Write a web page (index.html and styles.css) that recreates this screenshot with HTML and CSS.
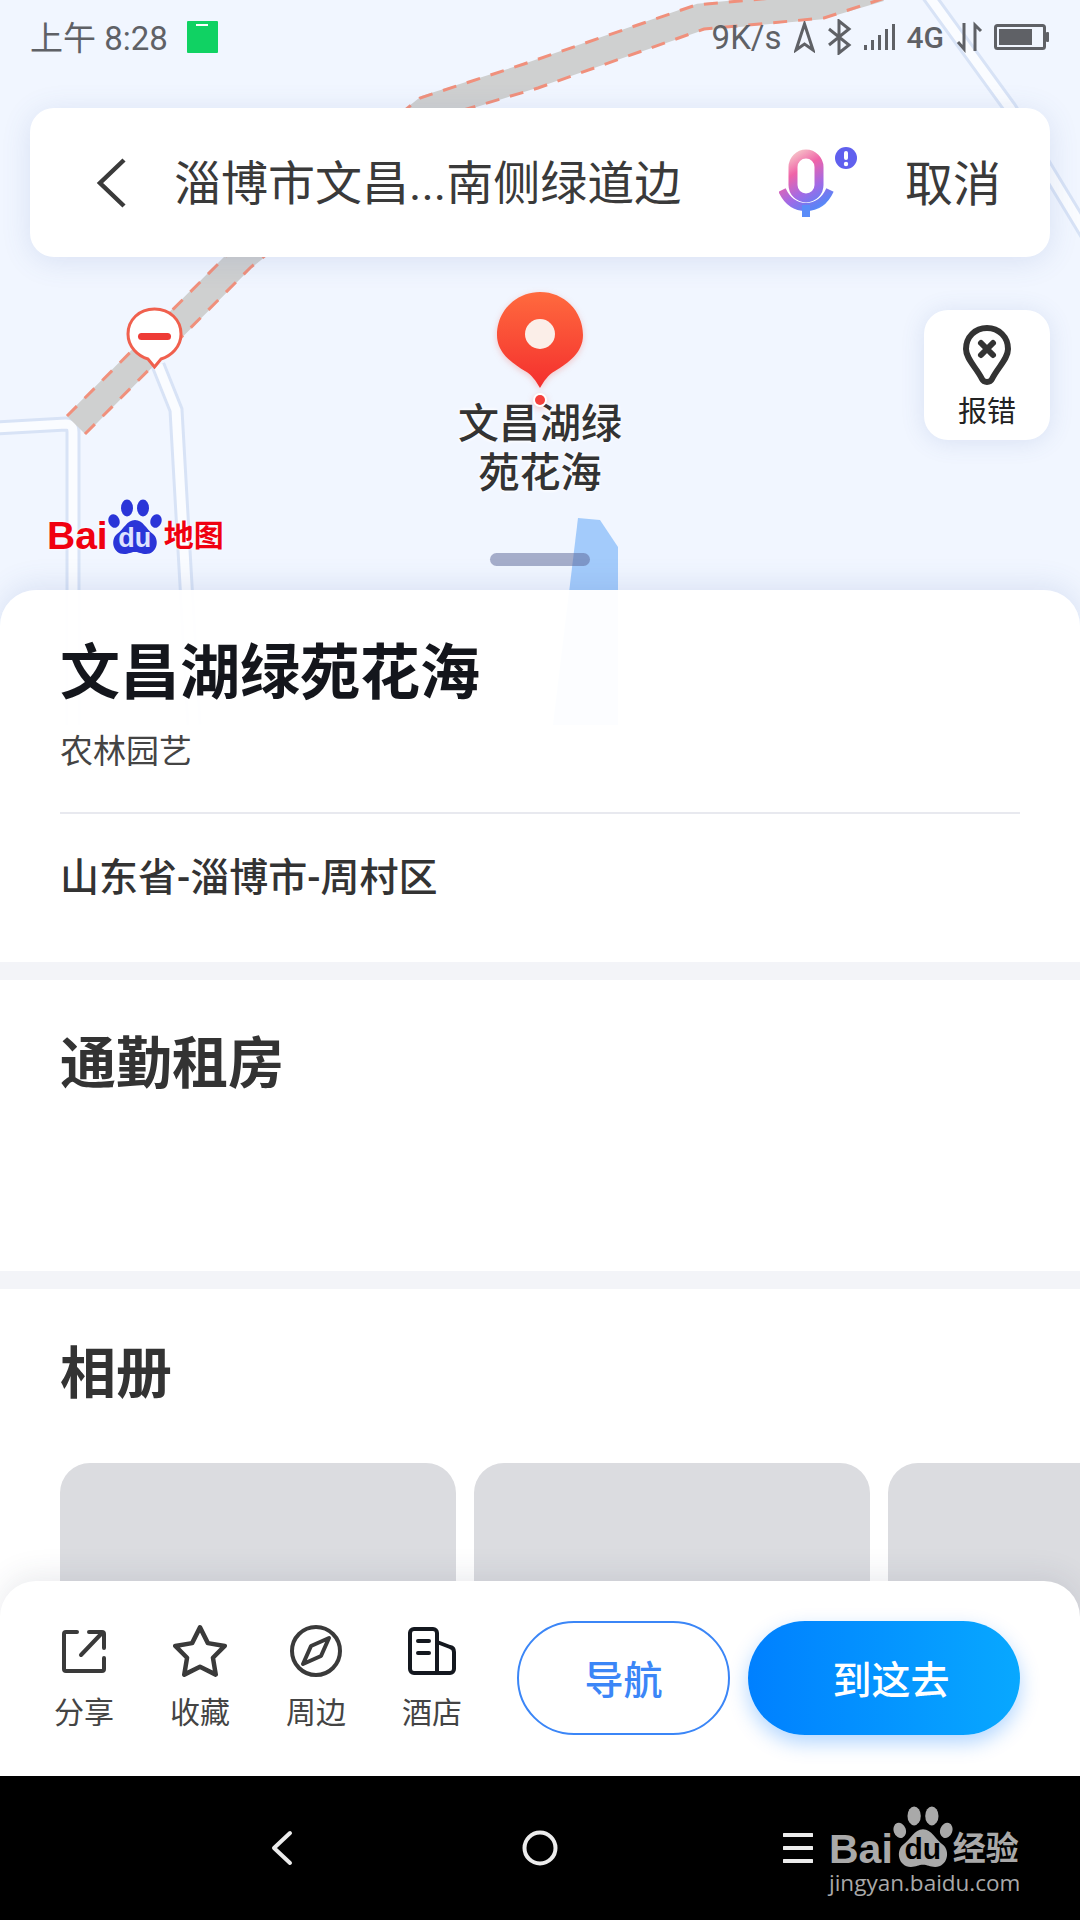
FILE: index.html
```html
<!DOCTYPE html>
<html lang="zh-CN">
<head>
    <meta charset="UTF-8">
    <title>文昌湖绿苑花海</title>
    <link rel="stylesheet" href="styles.css">
</head>
<body>
<div class="screen">
    <!-- map drawing, runs under the top of the sheet -->
    <svg class="map-canvas" width="1080" height="725" viewBox="0 0 1080 725">
        <path class="water" d="M578 518 L600 520 L618 547 L618 725 L553 725 Z"/>
        <path class="road-edge" d="M928 -5 L1010 108 L1090 240"/>
        <path class="road-fill" d="M928 -5 L1010 108 L1090 240"/>
        <path class="road-edge" d="M-5 428 L66 424 Q73 424 73 432 L73 725"/>
        <path class="road-fill" d="M-5 428 L66 424 Q73 424 73 432 L73 725"/>
        <path class="road-edge" d="M158 365 L176 410 L194 725"/>
        <path class="road-fill" d="M158 365 L176 410 L194 725"/>
        <path class="rail" d="M76 425 L242 258 L428 108 L530 76 L700 17 L820 6 L880 -12"/>
        <path class="rail-dash" d="M85 434 L251 267 L436 118 L538 88 L704 29 L824 18 L885 -2"/>
        <path class="rail-dash" d="M67 416 L233 249 L420 98 L524 64 L696 5 L816 -6"/>
    </svg>

    <div class="map-area">
        <div class="statusbar">
            <div class="status-left">
                <span class="clock">上午 8:28</span>
                <svg class="wechat-tag" width="31" height="32" viewBox="0 0 31 32">
                    <rect width="31" height="32" rx="1" fill="#10d263"/>
                    <rect x="9" y="3" width="12" height="2" fill="#fff"/>
                </svg>
            </div>
            <div class="status-right">
                <span class="speed">9K/s</span>
                <svg width="21" height="32" viewBox="0 0 21 32"><path class="st-line" d="M10.5 3 L19 29 L10.5 23 L2 29 Z"/></svg>
                <svg width="25" height="36" viewBox="0 0 25 36"><path class="st-line" d="M2 10 L22 26 L12 34 V2 L22 10 L2 26"/></svg>
                <svg width="32" height="28" viewBox="0 0 32 28">
                    <rect class="st-fill" x="0" y="22" width="3" height="5"/>
                    <rect class="st-fill" x="7" y="17" width="3" height="10"/>
                    <rect class="st-fill" x="14" y="12" width="3" height="15"/>
                    <rect class="st-fill" x="21" y="6" width="3" height="21"/>
                    <rect class="st-fill" x="28" y="1" width="3" height="26"/>
                </svg>
                <span class="net">4G</span>
                <svg width="27" height="32" viewBox="0 0 27 32">
                    <path class="st-line" d="M8 2 V28 L2 21"/>
                    <path class="st-line" d="M19 30 V4 L25 10"/>
                </svg>
                <svg class="battery" width="56" height="28" viewBox="0 0 56 28">
                    <rect class="st-line" x="1.5" y="2.5" width="49" height="23" rx="2" stroke-width="2"/>
                    <rect class="st-fill" x="5" y="6" width="33" height="16"/>
                    <rect class="st-fill" x="52" y="9" width="3" height="10" rx="1"/>
                </svg>
            </div>
        </div>

        <div class="search">
            <svg class="search-back" width="34" height="52" viewBox="0 0 34 52"><path d="M30 3 L6 26 L30 49"/></svg>
            <div class="search-text">淄博市文昌<span class="dots">...</span>南侧绿道边</div>
            <svg class="mic" width="80" height="72" viewBox="0 0 80 72">
                <defs>
                    <linearGradient id="micGrad" gradientUnits="userSpaceOnUse" x1="14" y1="6" x2="52" y2="68">
                        <stop offset="0" stop-color="#f6c3c8"/>
                        <stop offset="0.25" stop-color="#f064a8"/>
                        <stop offset="0.55" stop-color="#a06ae6"/>
                        <stop offset="0.8" stop-color="#5a84f6"/>
                        <stop offset="1" stop-color="#6cc0ff"/>
                    </linearGradient>
                </defs>
                <rect x="14" y="7" width="26" height="44" rx="13" fill="none" stroke="url(#micGrad)" stroke-width="9"/>
                <path d="M3 43 C9 56 18 60 27 60 C36 60 45 56 51 43" fill="none" stroke="url(#micGrad)" stroke-width="8"/>
                <rect x="23" y="58" width="8" height="12" fill="#5a8cf8"/>
                <circle cx="67" cy="11" r="11" fill="#6060ee"/>
                <rect x="65" y="4" width="4" height="9" rx="2" fill="#fff"/>
                <circle cx="67" cy="17" r="2.2" fill="#fff"/>
            </svg>
            <div class="search-cancel">取消</div>
        </div>

        <!-- things placed on the map -->
        <svg class="closed-marker" width="57" height="62" viewBox="0 0 57 62">
            <path d="M28.5 2 C13 2 2 13 2 27 C2 40 12 49 22 52 L28.5 60 L35 52 C45 49 55 40 55 27 C55 13 44 2 28.5 2 Z" fill="#fff" stroke="#f0604e" stroke-width="3"/>
            <rect x="12" y="26" width="33" height="7" rx="3.5" fill="#ee3b36"/>
        </svg>

        <div class="poi">
            <svg width="90" height="116" viewBox="0 0 90 116">
                <defs>
                    <linearGradient id="pinGrad" x1="0" y1="0" x2="0" y2="1">
                        <stop offset="0" stop-color="#ff6a3e"/>
                        <stop offset="1" stop-color="#f42f2e"/>
                    </linearGradient>
                </defs>
                <path d="M45 1 C21 1 2 20 2 44 C2 62 17 72 30 80 C37 84 41 90 45 97 C49 90 53 84 60 80 C73 72 88 62 88 44 C88 20 69 1 45 1 Z" fill="url(#pinGrad)"/>
                <circle cx="45" cy="43" r="15" fill="#fbeee8"/>
                <circle cx="45" cy="109" r="7" fill="#fff"/>
                <circle cx="45" cy="109" r="5" fill="#f5403c"/>
            </svg>
            <div class="poi-label">文昌湖绿<br>苑花海</div>
        </div>

        <div class="map-logo">
            <span class="logo-bai">Bai</span>
            <span class="logo-paw">
                <svg width="54" height="56" viewBox="0 0 54 56">
                    <ellipse cx="6" cy="22" rx="5.5" ry="7" transform="rotate(-20 6 22)"/>
                    <ellipse cx="19" cy="9" rx="6" ry="8.5"/>
                    <ellipse cx="35" cy="9" rx="6" ry="8.5"/>
                    <ellipse cx="48" cy="22" rx="5.5" ry="7" transform="rotate(20 48 22)"/>
                    <path d="M27 21 C19 21 16 30 9 35 C2 41 5 55 16 55 C21 55 23 53 27 53 C31 53 33 55 38 55 C49 55 52 41 45 35 C38 30 35 21 27 21 Z"/>
                </svg>
                <span class="logo-du">du</span>
            </span>
            <span class="logo-cn">地图</span>
        </div>

        <div class="report">
            <svg width="48" height="60" viewBox="0 0 48 60">
                <path d="M24 3 C12 3 3 12 3 24 C3 34 13 42 19 54 C21 58 27 58 29 54 C35 42 45 34 45 24 C45 12 36 3 24 3 Z"/>
                <path class="report-x" d="M18 18 L30 30 M30 18 L18 30"/>
            </svg>
            <div class="report-label">报错</div>
        </div>

        <div class="handle"></div>
    </div>

    <div class="sheet">
        <section class="section place">
            <h1 class="place-name">文昌湖绿苑花海</h1>
            <div class="place-type">农林园艺</div>
            <div class="place-line"></div>
            <div class="place-addr">山东省-淄博市-周村区</div>
        </section>
        <section class="section commute">
            <h2 class="section-title">通勤租房</h2>
        </section>
        <section class="section album">
            <h2 class="section-title">相册</h2>
            <div class="photos">
                <div class="photo"></div>
                <div class="photo"></div>
                <div class="photo"></div>
            </div>
        </section>

        <div class="actions">
            <div class="action">
                <svg width="48" height="48" viewBox="0 0 48 48">
                    <path d="M17 5 H6 a2 2 0 0 0 -2 2 V42 a2 2 0 0 0 2 2 H42 a2 2 0 0 0 2 -2 V31"/>
                    <path d="M29 5 H42 a2 2 0 0 1 2 2 V21"/>
                    <path d="M42 6 L21 28"/>
                </svg>
                <span>分享</span>
            </div>
            <div class="action">
                <svg width="54" height="48" viewBox="0 0 48 48">
                    <path d="M24 3 L31 17 L46 19.5 L35.5 30 L38 45 L24 38 L10 45 L12.5 30 L2 19.5 L17 17 Z"/>
                </svg>
                <span>收藏</span>
            </div>
            <div class="action">
                <svg width="52" height="52" viewBox="0 0 52 52">
                    <circle cx="26" cy="26" r="24"/>
                    <path d="M39 13 L31 31 L13 39 L21 21 Z"/>
                </svg>
                <span>周边</span>
            </div>
            <div class="action">
                <svg class="dark" width="52" height="48" viewBox="0 0 52 48">
                    <path d="M8 2 H27 a4 4 0 0 1 4 4 V46 H8 a4 4 0 0 1 -4 -4 V6 a4 4 0 0 1 4 -4 Z"/>
                    <path d="M31 15 L44 20 a5 5 0 0 1 4 5 V42 a4 4 0 0 1 -4 4 H31"/>
                    <path d="M12 14 H23 M12 26 H23"/>
                </svg>
                <span>酒店</span>
            </div>
            <div class="btn btn-nav">导航</div>
            <div class="btn btn-go">到这去</div>
        </div>
    </div>

    <div class="navbar">
        <div class="nav-cell">
            <svg width="24" height="36" viewBox="0 0 24 36"><path d="M20 3 L4 18 L20 33"/></svg>
        </div>
        <div class="nav-cell">
            <svg width="36" height="36" viewBox="0 0 36 36"><circle cx="18" cy="18" r="15.5"/></svg>
        </div>
        <div class="nav-cell">
            <svg width="30" height="32" viewBox="0 0 30 32"><path d="M1 3 H29 M1 16 H29 M1 29 H29"/></svg>
        </div>
        <div class="watermark">
            <div class="wm-logo">
                <span class="wm-bai">Bai</span>
                <span class="wm-paw">
                    <svg width="60" height="62" viewBox="0 0 54 56">
                        <ellipse cx="6" cy="22" rx="5.5" ry="7" transform="rotate(-20 6 22)"/>
                        <ellipse cx="19" cy="9" rx="6" ry="8.5"/>
                        <ellipse cx="35" cy="9" rx="6" ry="8.5"/>
                        <ellipse cx="48" cy="22" rx="5.5" ry="7" transform="rotate(20 48 22)"/>
                        <path d="M27 21 C19 21 16 30 9 35 C2 41 5 55 16 55 C21 55 23 53 27 53 C31 53 33 55 38 55 C49 55 52 41 45 35 C38 30 35 21 27 21 Z"/>
                    </svg>
                    <span class="wm-du">du</span>
                </span>
                <span class="wm-cn">经验</span>
            </div>
            <div class="wm-url">jingyan.baidu.com</div>
        </div>
    </div>
</div>
</body>
</html>
```

FILE: styles.css
```css
* {
    box-sizing: border-box;
}

body {
    margin: 0;
    font-family: Roboto, "Noto Sans CJK SC", sans-serif;
    color: #333;
}

.screen {
    position: relative;
    width: 1080px;
    height: 1920px;
    display: flex;
    flex-direction: column;
    overflow: hidden;
    background-color: #f1f6ff;
}

/* map */
.map-canvas {
    position: absolute;
    top: 0;
    left: 0;
}

.water {
    fill: #a3cbfb;
}

.road-edge,
.road-fill,
.rail,
.rail-dash {
    fill: none;
}

.road-edge {
    stroke: #d8e3f6;
    stroke-width: 15;
}

.road-fill {
    stroke: #fafcff;
    stroke-width: 9;
}

.rail {
    stroke: #cfd0d0;
    stroke-width: 27;
}

.rail-dash {
    stroke: #f0907c;
    stroke-width: 3;
    stroke-dasharray: 14 11;
}

.map-area {
    position: relative;
    flex: 0 0 590px;
}

/* status bar */
.statusbar {
    display: flex;
    justify-content: space-between;
    align-items: center;
    height: 74px;
    padding: 0 30px;
    font-size: 33px;
    color: #5f6166;
}

.status-left,
.status-right {
    display: flex;
    align-items: center;
}

.clock {
    margin-bottom: 2px;
}

.wechat-tag {
    margin-left: 19px;
}

.status-right svg {
    margin-left: 12px;
}

.status-right .battery {
    margin-left: 11px;
}

.net {
    margin-left: 11px;
    font-size: 30px;
    font-weight: 500;
}

.st-line {
    fill: none;
    stroke: #5f6166;
    stroke-width: 3;
}

.st-fill {
    fill: #5f6166;
}

/* search card */
.search {
    position: relative;
    display: flex;
    align-items: center;
    height: 149px;
    margin: 34px 30px 0;
    padding: 0 49px 0 64px;
    background-color: #fff;
    border-radius: 24px;
    box-shadow: 0 4px 30px rgba(70, 100, 170, 0.14);
}

.search-back path {
    fill: none;
    stroke: #3a3a3a;
    stroke-width: 4.5;
}

.search-text {
    margin-left: 46px;
    padding-bottom: 6px;
    font-size: 47px;
    white-space: nowrap;
    color: #3a3a3a;
}

.mic {
    margin-left: 98px;
}

.search-cancel {
    margin-left: auto;
    padding-bottom: 6px;
    font-size: 48px;
    color: #3a3a3a;
}

/* map pins */
.closed-marker {
    position: absolute;
    top: 307px;
    left: 126px;
}

.poi {
    position: absolute;
    top: 291px;
    left: 440px;
    width: 200px;
    display: flex;
    flex-direction: column;
    align-items: center;
}

.poi svg {
    display: block;
    filter: drop-shadow(0 2px 3px rgba(240, 60, 40, 0.25));
}

.poi-label {
    margin-top: -7px;
    font-size: 41px;
    font-weight: 500;
    line-height: 49px;
    text-align: center;
    text-shadow: 0 0 4px #fff, 0 0 4px #fff;
}

.map-logo {
    position: absolute;
    top: 499px;
    left: 47px;
    display: flex;
    align-items: flex-end;
    color: #f00010;
}

.logo-bai {
    margin-bottom: -3px;
    font-family: "Liberation Sans", sans-serif;
    font-size: 39px;
    font-weight: bold;
    line-height: 44px;
    text-shadow: 0 0 3px #fff;
}

.logo-paw {
    position: relative;
    width: 54px;
    height: 56px;
    fill: #2a35d8;
}

.logo-du {
    position: absolute;
    left: 0;
    right: 0;
    bottom: 2px;
    font-family: "Liberation Sans", sans-serif;
    font-size: 27px;
    font-weight: bold;
    line-height: 30px;
    text-align: center;
    color: #dfe3ff;
}

.logo-cn {
    margin-left: 2px;
    margin-bottom: -3px;
    font-size: 30px;
    font-weight: bold;
    line-height: 44px;
    text-shadow: 0 0 3px #fff;
}

.report {
    position: absolute;
    top: 310px;
    right: 30px;
    width: 126px;
    height: 130px;
    padding-top: 15px;
    background-color: #fff;
    border-radius: 24px;
    box-shadow: 0 2px 24px rgba(70, 100, 170, 0.14);
    text-align: center;
}

.report svg {
    display: block;
    margin: 0 auto;
}

.report path {
    fill: none;
    stroke: #333;
    stroke-width: 6;
    stroke-linecap: round;
}

.report-label {
    margin-top: 8px;
    font-size: 29px;
    line-height: 38px;
    color: #222;
}

.handle {
    position: absolute;
    top: 553px;
    left: 490px;
    width: 100px;
    height: 13px;
    border-radius: 7px;
    background-color: rgba(90, 100, 150, 0.5);
}

/* bottom sheet */
.sheet {
    position: relative;
    flex: 1;
    overflow: hidden;
    border-radius: 36px 36px 0 0;
    box-shadow: 0 -4px 30px rgba(70, 100, 170, 0.14);
}

.section {
    padding-left: 60px;
    border-bottom: 18px solid #f3f4f8;
    background-color: #fff;
}

.place {
    height: 390px;
    padding-top: 54px;
    padding-right: 60px;
    background-color: rgba(255, 255, 255, 0.96);
}

.place-name {
    margin: 0;
    font-size: 60px;
    font-weight: bold;
    line-height: 60px;
    color: #14161c;
}

.place-type {
    margin-top: 28px;
    font-size: 33px;
    line-height: 40px;
    color: #444;
}

.place-line {
    height: 2px;
    margin-top: 40px;
    background-color: #e8e9ef;
}

.place-addr {
    margin-top: 39px;
    font-size: 39px;
    font-weight: 500;
    line-height: 50px;
}

.commute {
    height: 309px;
    padding-top: 54px;
}

.section-title {
    margin: 0;
    font-size: 56px;
    font-weight: bold;
    line-height: 60px;
}

.album {
    height: 600px;
    padding-top: 55px;
    border-bottom: none;
}

.photos {
    display: flex;
    gap: 18px;
    margin-top: 59px;
}

.photo {
    flex: 0 0 396px;
    height: 300px;
    border-radius: 30px;
    background-color: #dbdce0;
}

/* action bar */
.actions {
    position: absolute;
    left: 0;
    right: 0;
    bottom: 0;
    height: 195px;
    display: flex;
    align-items: flex-start;
    padding: 40px 0 0 26px;
    background-color: #fff;
    border-radius: 36px 36px 0 0;
    box-shadow: 0 -6px 30px rgba(50, 60, 90, 0.1);
}

.action {
    width: 116px;
    padding-top: 3px;
    display: flex;
    flex-direction: column;
    align-items: center;
    font-size: 30px;
    line-height: 36px;
    color: #444;
}

.action svg {
    height: 54px;
    margin-bottom: 17px;
}

.action path,
.action circle {
    fill: none;
    stroke: #3a3a3a;
    stroke-width: 4;
    stroke-linejoin: round;
    stroke-linecap: round;
}

.action .dark path {
    stroke: #14181f;
}

.btn {
    display: flex;
    align-items: center;
    justify-content: center;
    height: 114px;
    padding-bottom: 3px;
    border-radius: 57px;
    font-size: 39px;
    font-weight: 500;
}

.btn-nav {
    width: 213px;
    margin-left: 27px;
    border: 2px solid #3b86f7;
    color: #3b86f7;
}

.btn-go {
    width: 272px;
    margin-left: 18px;
    padding-left: 14px;
    color: #fff;
    background: linear-gradient(90deg, #0080ff, #08a8ff);
    box-shadow: 0 8px 20px rgba(0, 120, 255, 0.3);
}

/* system nav */
.navbar {
    position: relative;
    flex: 0 0 144px;
    display: flex;
    padding-left: 153px;
    background-color: #000;
}

.nav-cell {
    width: 258px;
    display: flex;
    align-items: center;
    justify-content: center;
}

.nav-cell path,
.nav-cell circle {
    fill: none;
    stroke: #ececec;
    stroke-width: 4;
    stroke-linecap: round;
    stroke-linejoin: round;
}

.watermark {
    position: absolute;
    top: 30px;
    left: 829px;
    width: 200px;
    color: #a9a9a9;
}

.wm-logo {
    display: flex;
    align-items: flex-end;
    height: 62px;
    fill: #a9a9a9;
}

.wm-bai {
    margin-bottom: -4px;
    font-family: "Liberation Sans", sans-serif;
    font-size: 41px;
    font-weight: bold;
    line-height: 46px;
}

.wm-paw {
    position: relative;
    width: 60px;
    height: 62px;
}

.wm-du {
    position: absolute;
    left: 0;
    right: 0;
    bottom: 2px;
    font-family: "Liberation Sans", sans-serif;
    font-size: 30px;
    font-weight: bold;
    line-height: 34px;
    text-align: center;
    color: #000;
}

.wm-cn {
    margin-bottom: -4px;
    font-size: 33px;
    font-weight: bold;
    line-height: 46px;
}

.wm-url {
    margin-top: 4px;
    font-family: "Open Sans", sans-serif;
    font-size: 22.5px;
    line-height: 22px;
}
```
